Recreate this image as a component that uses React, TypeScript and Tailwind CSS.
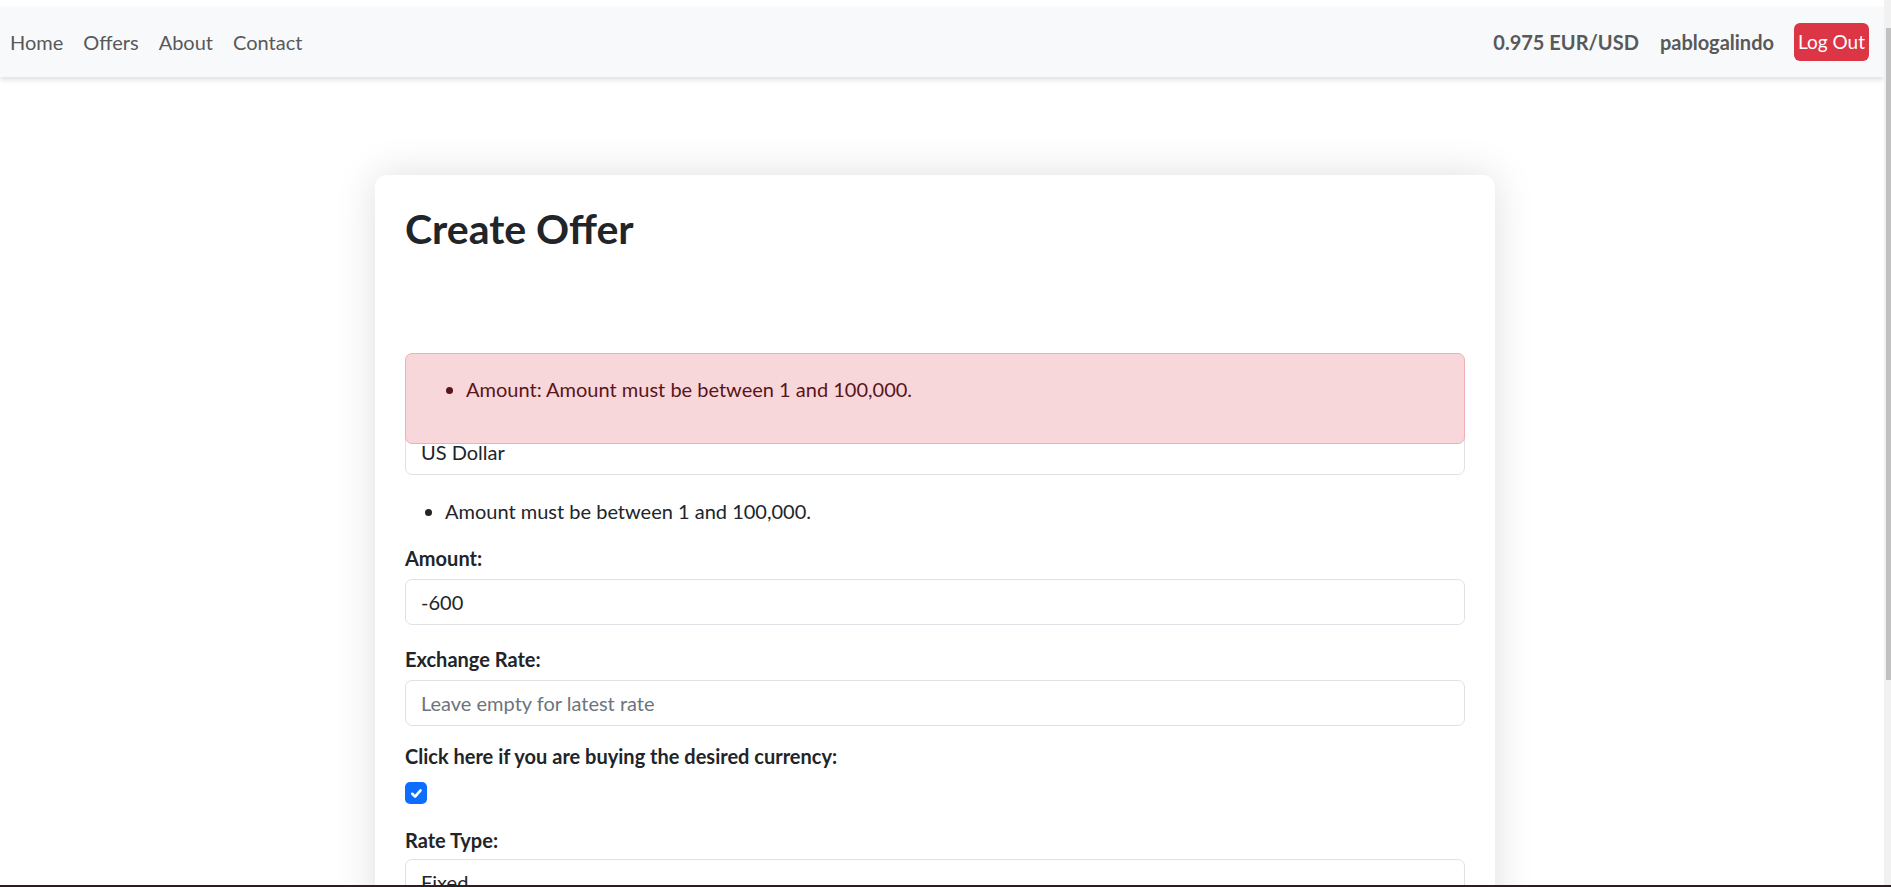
import React from "react";

const font = { fontFamily: "Lato, 'Noto Sans', sans-serif" };

function Label({ children }: { children: React.ReactNode }) {
  return (
    <label className="block h-[30px] leading-[30px] text-[20px] font-bold text-[#212529] mb-[6px]">
      {children}
    </label>
  );
}

function Input({ value, placeholder }: { value?: string; placeholder?: string }) {
  return (
    <div className="h-[46px] w-full border border-[#dee2e6] rounded-[7px] bg-white flex items-center px-[15px] text-[20px]">
      {value ? (
        <span className="text-[#212529]">{value}</span>
      ) : (
        <span className="text-[#6c757d]">{placeholder}</span>
      )}
    </div>
  );
}

export default function App() {
  return (
    <div className="h-[887px] w-[1891px] overflow-hidden flex flex-col bg-white" style={font}>
      <div className="flex flex-1 min-h-0 overflow-hidden">
        <div className="flex-1 flex flex-col min-w-0 overflow-hidden">
          <div className="h-[7px] shrink-0 bg-white" />
          <nav className="h-[70px] shrink-0 bg-[#f8f9fa] shadow-[0_3px_5px_rgba(0,0,0,0.12)] flex items-center justify-between pr-[15px] relative z-10">
            <div className="flex items-center text-[20px] text-[#585858]">
              <a className="pl-[10px] pr-[10px]">Home</a>
              <a className="px-[10px]">Offers</a>
              <a className="px-[10px]">About</a>
              <a className="px-[10px]">Contact</a>
            </div>
            <div className="flex items-center text-[20px] font-bold text-[#58595a]">
              <span>0.975 EUR/USD</span>
              <span className="ml-[21px]">pablogalindo</span>
              <button className="ml-[20px] w-[75px] h-[38px] rounded-[6px] bg-[#dc3545] text-white font-normal text-[19px] flex items-center justify-center">
                Log Out
              </button>
            </div>
          </nav>
          <main className="shrink-0 pl-[375px] pt-[98px]">
            <div className="w-[1120px] h-[800px] bg-white rounded-[12px] shadow-[0_0_40px_rgba(0,0,0,0.13)] px-[30px] pt-[30px] relative">
              <h2 className="text-[41px] leading-[48px] font-bold text-[#212529] mb-[140px]">Create Offer</h2>

              <Label>Currency:</Label>
              <Input value="US Dollar" />
              <ul className="list-disc pl-[40px] mt-[21px] mb-[17px] text-[20px] leading-[30px] text-[#212529]">
                <li>Amount must be between 1 and 100,000.</li>
              </ul>

              <Label>Amount:</Label>
              <Input value="-600" />
              <div className="h-[19px]" />

              <Label>Exchange Rate:</Label>
              <Input placeholder="Leave empty for latest rate" />
              <div className="h-[15px]" />

              <Label>Click here if you are buying the desired currency:</Label>
              <div className="mt-[11px] w-[22px] h-[22px] rounded-[5px] bg-[#0d6efd] flex items-center justify-center">
                <svg width="15" height="15" viewBox="0 0 16 16" fill="none">
                  <path d="M3.5 8.3l3 3 5.8-6.6" stroke="white" strokeWidth="2.8" strokeLinecap="round" strokeLinejoin="round" />
                </svg>
              </div>
              <div className="h-[21px]" />

              <Label>Rate Type:</Label>
              <div className="-mt-[2px]">
                <Input value="Fixed" />
              </div>

              <div className="absolute top-[178px] left-[30px] w-[1060px] h-[91px] bg-[#f8d7da] border border-[#f1aeb5] rounded-[7px] px-[20px] pt-[20px] text-[#58151c] z-20">
                <ul className="list-disc pl-[40px] text-[20px] leading-[30px]">
                  <li>Amount: Amount must be between 1 and 100,000.</li>
                </ul>
              </div>
            </div>
          </main>
        </div>
        <div className="w-[7px] shrink-0 bg-[#f1f1f1] flex flex-col items-end">
          <div className="h-[28px] shrink-0" />
          <div className="w-[5px] h-[652px] shrink-0 bg-[#c1c1c1]" />
        </div>
      </div>
      <div className="h-[2px] shrink-0 bg-[#2b1d22]" />
    </div>
  );
}
